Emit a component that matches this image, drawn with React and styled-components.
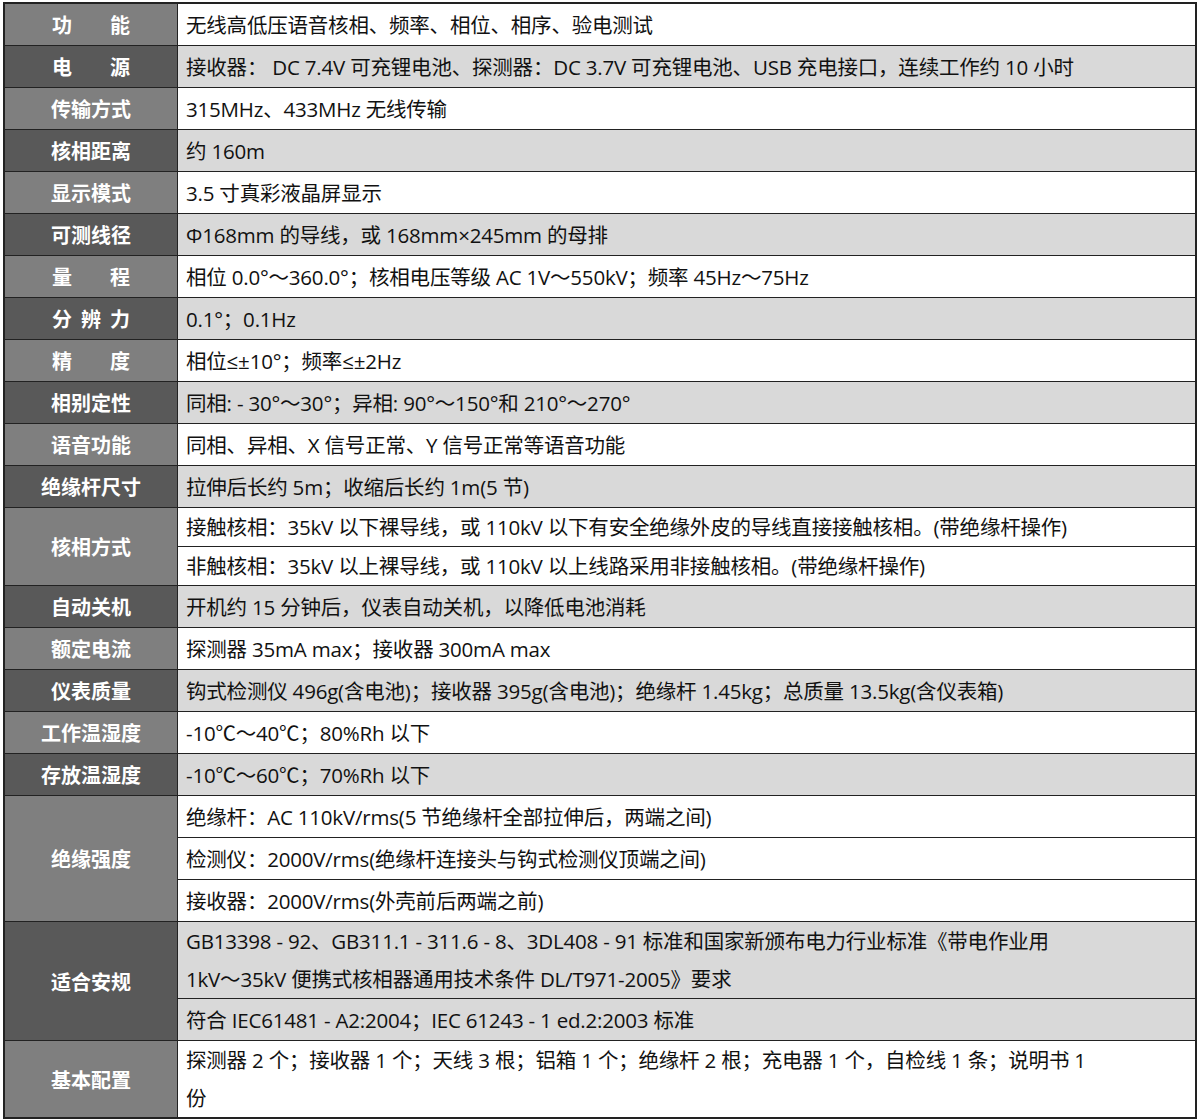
import styled, { createGlobalStyle } from "styled-components"

const Global = createGlobalStyle`
    body {
        margin: 0;
        background: #fff;
        font-family: "Open Sans", "Noto Sans CJK SC", sans-serif;
    }
`

const Table = styled.table`
    margin: 2px 3px;
    width: 1194px;
    border-collapse: collapse;
    border: 2px solid #222;
    font-size: 20.5px;
    color: #111;
`

const Head = styled.th`
    width: 172px;
    background: ${p => p.$dark ? "#595959" : "#7f7f7f"};
    color: #fff;
    font-weight: 700;
    font-family: "Noto Sans CJK SC", sans-serif;
    font-size: 20px;
    border: 1.5px solid #222;
    text-align: center;
    padding: 0;
    letter-spacing: ${p => p.$spread || "0"};
    text-indent: ${p => p.$spread || "0"};
    white-space: nowrap;
`

const Cell = styled.td`
    background: ${p => p.$dark ? "#d9d9d9" : "#fff"};
    border: 1.5px solid #222;
    padding: ${p => p.$tall ? "0 8px" : "0 8px"};
    height: ${p => p.$h || 41}px;
    line-height: 38px;
    white-space: nowrap;
    letter-spacing: -0.2px;
`

const rows = [
    ["功能", ["无线高低压语音核相、频率、相位、相序、验电测试"], "1.9em"],
    ["电源", ["接收器： DC 7.4V 可充锂电池、探测器：DC 3.7V 可充锂电池、USB 充电接口，连续工作约 10 小时"], "1.9em"],
    ["传输方式", ["315MHz、433MHz 无线传输"]],
    ["核相距离", ["约 160m"]],
    ["显示模式", ["3.5 寸真彩液晶屏显示"]],
    ["可测线径", ["Φ168mm 的导线，或 168mm×245mm 的母排"]],
    ["量程", ["相位 0.0°～360.0°；核相电压等级 AC 1V～550kV；频率 45Hz～75Hz"], "1.9em"],
    ["分辨力", ["0.1°；0.1Hz"], "0.45em"],
    ["精度", ["相位≤±10°；频率≤±2Hz"], "1.9em"],
    ["相别定性", ["同相: - 30°～30°；异相: 90°～150°和 210°～270°"]],
    ["语音功能", ["同相、异相、X 信号正常、Y 信号正常等语音功能"]],
    ["绝缘杆尺寸", ["拉伸后长约 5m；收缩后长约 1m(5 节)"]],
    ["核相方式", ["接触核相：35kV 以下裸导线，或 110kV 以下有安全绝缘外皮的导线直接接触核相。(带绝缘杆操作)", "非触核相：35kV 以上裸导线，或 110kV 以上线路采用非接触核相。(带绝缘杆操作)"]],
    ["自动关机", ["开机约 15 分钟后，仪表自动关机，以降低电池消耗"]],
    ["额定电流", ["探测器 35mA max；接收器 300mA max"]],
    ["仪表质量", ["钩式检测仪 496g(含电池)；接收器 395g(含电池)；绝缘杆 1.45kg；总质量 13.5kg(含仪表箱)"]],
    ["工作温湿度", ["-10℃～40℃；80%Rh 以下"]],
    ["存放温湿度", ["-10℃～60℃；70%Rh 以下"]],
    ["绝缘强度", ["绝缘杆：AC 110kV/rms(5 节绝缘杆全部拉伸后，两端之间)", "检测仪：2000V/rms(绝缘杆连接头与钩式检测仪顶端之间)", "接收器：2000V/rms(外壳前后两端之前)"]],
    ["适合安规", [["GB13398 - 92、GB311.1 - 311.6 - 8、3DL408 - 91 标准和国家新颁布电力行业标准《带电作业用", "1kV～35kV 便携式核相器通用技术条件 DL/T971-2005》要求"], "符合 IEC61481 - A2:2004；IEC 61243 - 1 ed.2:2003 标准"]],
    ["基本配置", [["探测器 2 个；接收器 1 个；天线 3 根；铝箱 1 个；绝缘杆 2 根；充电器 1 个，自检线 1 条；说明书 1", "份"]]],
]

export default function App() {
    return (
        <>
            <Global />
            <Table>
                <tbody>
                    {rows.flatMap(([label, cells, spread], i) => {
                        const dark = i % 2 === 1
                        return cells.map((text, j) => (
                            <tr key={`${i}-${j}`}>
                                {j === 0 && (
                                    <Head $dark={dark} $spread={spread} rowSpan={cells.length}>
                                        {label}
                                    </Head>
                                )}
                                <Cell $dark={dark} $h={i === 12 ? 38 : 41}>
                                    {Array.isArray(text)
                                        ? text.map((line, k) => <div key={k}>{line}</div>)
                                        : text}
                                </Cell>
                            </tr>
                        ))
                    })}
                </tbody>
            </Table>
        </>
    )
}
